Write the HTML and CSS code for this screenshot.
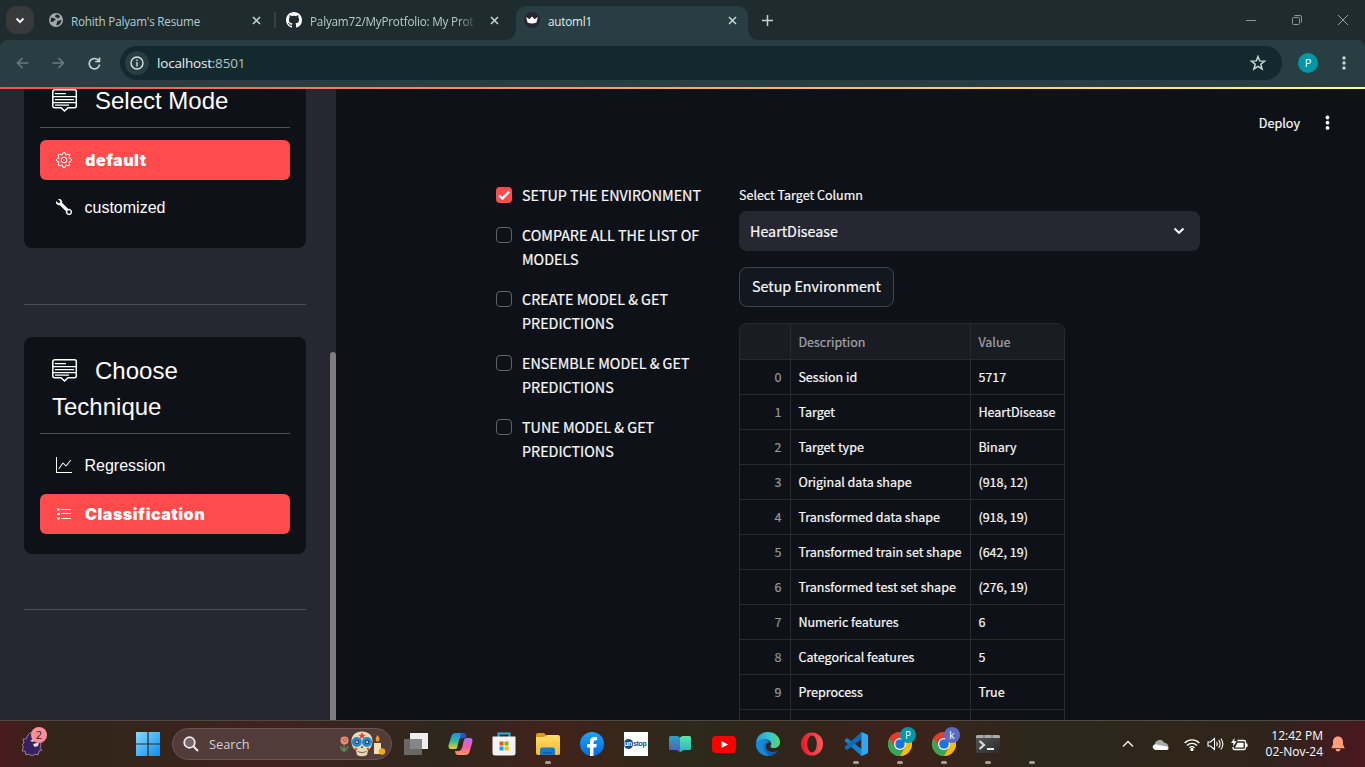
FILE: index.html
```html
<!DOCTYPE html>
<html lang="en">
<head>
<meta charset="utf-8">
<title>automl1</title>
<link rel="stylesheet" href="styles.css">
</head>
<body>
<svg width="0" height="0" class="defs">
  <defs>
    <linearGradient id="win" x1="0" y1="0" x2="1" y2="1"><stop offset="0" stop-color="#83dcff"/><stop offset="1" stop-color="#0b8df2"/></linearGradient>
    <linearGradient id="fold" x1="0" y1="0" x2="0" y2="1"><stop offset="0" stop-color="#ffdc6b"/><stop offset="1" stop-color="#f5b92a"/></linearGradient>
    <linearGradient id="fb" x1="0" y1="0" x2="0" y2="1"><stop offset="0" stop-color="#1aa6fb"/><stop offset="1" stop-color="#0668e1"/></linearGradient>
    <linearGradient id="cpa" x1="0" y1="0" x2="0" y2="1"><stop offset="0" stop-color="#1b8ff0"/><stop offset=".5" stop-color="#2fb89a"/><stop offset="1" stop-color="#f2d01e"/></linearGradient>
    <linearGradient id="cpb" x1="0" y1="0" x2="0" y2="1"><stop offset="0" stop-color="#b56cf5"/><stop offset=".55" stop-color="#f0609c"/><stop offset="1" stop-color="#ff9a62"/></linearGradient>
    <linearGradient id="bkl" x1="0" y1="0" x2="0" y2="1"><stop offset="0" stop-color="#29a4bf"/><stop offset="1" stop-color="#5b55bf"/></linearGradient>
    <linearGradient id="bkr" x1="0" y1="0" x2="0" y2="1"><stop offset="0" stop-color="#5ee6a6"/><stop offset="1" stop-color="#22b3c4"/></linearGradient>
    <linearGradient id="edt" x1="0" y1="0" x2="1" y2="0"><stop offset="0" stop-color="#1f9de0"/><stop offset=".6" stop-color="#36c7cf"/><stop offset="1" stop-color="#63d957"/></linearGradient>
    <linearGradient id="edb" x1="0" y1="0" x2="1" y2="1"><stop offset="0" stop-color="#1b8fe0"/><stop offset="1" stop-color="#0b4ea5"/></linearGradient>
    <linearGradient id="opr" x1="0" y1="0" x2="1" y2="0"><stop offset="0" stop-color="#f0142d"/><stop offset="1" stop-color="#ff5a5a"/></linearGradient>
    <linearGradient id="trm" x1="0" y1="0" x2="1" y2="1"><stop offset="0" stop-color="#575757"/><stop offset="1" stop-color="#2a2a2a"/></linearGradient>
    <g id="chrome">
      <circle cx="12" cy="12" r="12" fill="#ea4335"/>
      <path d="M1.6 6A12 12 0 0 0 12 24L17.2 15 12 12 6.8 15Z" fill="#34a853"/>
      <path d="M22.4 6A12 12 0 0 1 12 24L17.2 15 12 6Z" fill="#fbbc04"/>
      <path d="M12 6H22.4A12 12 0 0 0 1.6 6L6.8 15Z" fill="#e33b2e"/>
      <circle cx="12" cy="12" r="6" fill="#fff"/><circle cx="12" cy="12" r="4.8" fill="#1a73e8"/>
    </g>
    <g id="note" fill="none" stroke="#fff" stroke-width="1.5">
      <path d="M3 .8H22.500Q24.300 .8 24.300 2.500V17Q24.300 18.700 22.500 18.700H16L12.500 22 9 18.700H2.500Q.8 18.700 .8 17V2.500Q.8 .8 3 .8Z"/>
      <path d="M3 4.500H14M1 7.500H24M3 10.500H22M1 13.500H24M3 16H17" stroke-width="1.250"/>
    </g>
    <path id="x" d="M1 1L8 8M8 1L1 8" fill="none" stroke="currentColor" stroke-width="1.5"/>
  </defs>
</svg>

<header class="tabs">
  <div class="tab-menu"><svg width="10" height="7" viewBox="0 0 10 7"><path d="M1.5 1.5L5 5 8.5 1.5" fill="none" stroke="#e8eeee" stroke-width="2"/></svg></div>
  <div class="tab first">
    <svg class="fav" width="14" height="14" viewBox="0 0 14 14"><circle cx="7" cy="7" r="7" fill="#a3a9b0"/><path d="M2.2 4.5L5.5 5.2 7 7.3H5.5L4 9 1.4 8.5ZM7 1.4L10 2 11 4 9 5.4 7.5 4.6 5.8 3.6ZM8.5 8L11.8 7 12.5 8 10.5 11.5 7.2 12.4 7.6 10.4Z" fill="#1e2c2f"/></svg>
    <span class="tab-title">Rohith Palyam's Resume</span>
    <svg class="close" width="9" height="9"><use href="#x"/></svg>
  </div>
  <div class="tab second">
    <svg class="fav" width="16" height="16" viewBox="0 0 16 16"><path fill="#fff" d="M8 0C3.58 0 0 3.58 0 8c0 3.54 2.29 6.53 5.47 7.59.4.07.55-.17.55-.38 0-.19-.01-.82-.01-1.49-2.01.37-2.53-.49-2.69-.94-.09-.23-.48-.94-.82-1.13-.28-.15-.68-.52-.01-.53.63-.01 1.08.58 1.23.82.72 1.21 1.87.87 2.33.66.07-.52.28-.87.51-1.07-1.78-.2-3.64-.89-3.64-3.95 0-.87.31-1.59.82-2.15-.08-.2-.36-1.02.08-2.12 0 0 .67-.21 2.2.82.64-.18 1.32-.27 2-.27.68 0 1.36.09 2 .27 1.53-1.04 2.2-.82 2.2-.82.44 1.1.16 1.92.08 2.12.51.56.82 1.27.82 2.15 0 3.07-1.87 3.75-3.65 3.95.29.25.54.73.54 1.48 0 1.07-.01 1.93-.01 2.2 0 .21.15.46.55.38A8.012 8.012 0 0 0 16 8c0-4.42-3.58-8-8-8z"/></svg>
    <span class="tab-title fade">Palyam72/MyProtfolio: My Prot</span>
    <svg class="close" width="9" height="9"><use href="#x"/></svg>
  </div>
  <div class="tab active">
    <svg class="fav" width="16" height="16" viewBox="0 0 16 16"><circle cx="8" cy="8" r="8" fill="#262730"/><path d="M2 5L5.4 7.2 8 4.6 10.6 7.2 14 5 12.3 10.8Q8 12 3.7 10.8Z" fill="#fff"/></svg>
    <span class="tab-title">automl1</span>
    <svg class="close" width="9" height="9"><use href="#x"/></svg>
  </div>
  <svg class="plus" width="11" height="11"><path d="M5.5 0V11M0 5.5H11" stroke="#c5d2d4" stroke-width="1.5"/></svg>
  <div class="win">
    <svg width="10" height="10"><path d="M0 5.5H10" stroke="#8d9798"/></svg>
    <svg width="10" height="10" fill="none" stroke="#8d9798"><rect x=".5" y="2.5" width="7" height="7" rx="1"/><path d="M2.5 .5H8Q9.500 .5 9.500 2V7.500"/></svg>
    <svg width="10" height="10"><path d="M0 0L10 10M10 0L0 10" stroke="#98a1a2"/></svg>
  </div>
</header>

<div class="toolbar">
  <div class="nav">
    <svg width="13" height="12" class="dim"><path d="M12.500 6H1.500M6.500 1L1.500 6 6.500 11"/></svg>
    <svg width="13" height="12" class="dim"><path d="M.5 6H11.500M6.500 1L11.500 6 6.500 11"/></svg>
    <svg width="13" height="13" class="lit"><path d="M10.800 3.800A5.200 5.200 0 1 0 11.600 7.500M11.500 .5V4.500H7.200"/></svg>
  </div>
  <div class="omni">
    <span class="info"><svg width="14" height="14" fill="none" stroke="#d8e2e3" stroke-width="1.400"><circle cx="7" cy="7" r="6"/><path d="M7 6V10.500M7 3.500V5"/></svg></span>
    <span class="url">localhost<span class="port">:8501</span></span>
    <svg class="star" width="16" height="16" viewBox="0 0 16 16"><path d="M8 1.500L9.700 5.900 14.600 6.200 10.800 9.200 12.100 14 8 11.300 3.900 14 5.200 9.200 1.400 6.200 6.300 5.900Z" fill="none" stroke="#c9d6d8" stroke-width="1.500"/></svg>
  </div>
  <span class="avatar">P</span>
  <svg class="dots" width="4" height="16" fill="#c9d6d8"><circle cx="2" cy="3" r="1.700"/><circle cx="2" cy="8" r="1.700"/><circle cx="2" cy="13" r="1.700"/></svg>
</div>
<div class="rainbow"></div>

<div class="app">
  <aside class="sidebar">
    <section class="card mode">
      <h2><svg width="26" height="24"><use href="#note"/></svg>Select Mode</h2>
      <hr>
      <div class="item on"><svg width="16" height="16" viewBox="0 0 16 16" fill="#fff"><path d="M8 4.754a3.246 3.246 0 1 0 0 6.492 3.246 3.246 0 0 0 0-6.492zM5.754 8a2.246 2.246 0 1 1 4.492 0 2.246 2.246 0 0 1-4.492 0z"/><path d="M9.796 1.343c-.527-1.79-3.065-1.79-3.592 0l-.094.319a.873.873 0 0 1-1.255.52l-.292-.16c-1.64-.892-3.433.902-2.54 2.541l.159.292a.873.873 0 0 1-.52 1.255l-.319.094c-1.79.527-1.79 3.065 0 3.592l.319.094a.873.873 0 0 1 .52 1.255l-.16.292c-.892 1.64.901 3.434 2.541 2.54l.292-.159a.873.873 0 0 1 1.255.52l.094.319c.527 1.79 3.065 1.79 3.592 0l.094-.319a.873.873 0 0 1 1.255-.52l.292.16c1.64.893 3.434-.902 2.54-2.541l-.159-.292a.873.873 0 0 1 .52-1.255l.319-.094c1.79-.527 1.79-3.065 0-3.592l-.319-.094a.873.873 0 0 1-.52-1.255l.16-.292c.893-1.64-.902-3.433-2.541-2.54l-.292.159a.873.873 0 0 1-1.255-.52l-.094-.319zm-2.633.283c.246-.835 1.428-.835 1.674 0l.094.319a1.873 1.873 0 0 0 2.693 1.115l.291-.16c.764-.415 1.6.42 1.184 1.185l-.159.292a1.873 1.873 0 0 0 1.116 2.692l.318.094c.835.246.835 1.428 0 1.674l-.319.094a1.873 1.873 0 0 0-1.115 2.693l.16.291c.415.764-.42 1.6-1.185 1.184l-.291-.159a1.873 1.873 0 0 0-2.693 1.116l-.094.318c-.246.835-1.428.835-1.674 0l-.094-.319a1.873 1.873 0 0 0-2.692-1.115l-.292.16c-.764.415-1.6-.42-1.184-1.185l.159-.291A1.873 1.873 0 0 0 1.945 8.93l-.319-.094c-.835-.246-.835-1.428 0-1.674l.319-.094A1.873 1.873 0 0 0 3.06 4.377l-.16-.292c-.415-.764.42-1.6 1.185-1.184l.292.159a1.873 1.873 0 0 0 2.692-1.115l.094-.319z"/></svg><span>default</span></div>
      <div class="item"><svg width="16" height="16" viewBox="0 0 16 16" fill="#fff" stroke="#fff" stroke-width=".4"><path d="M.102 2.223A3.004 3.004 0 0 0 3.78 5.897l6.341 6.252A3.003 3.003 0 0 0 13 16a3 3 0 1 0-.851-5.878L5.897 3.781A3.004 3.004 0 0 0 2.223.1l2.141 2.142L4 4l-1.757.364L.102 2.223zm13.37 9.019.528.026.287.445.445.287.026.529L15 13l-.242.471-.026.529-.445.287-.287.445-.529.026L13 15l-.471-.242-.529-.026-.287-.445-.445-.287-.026-.529L11 13l.242-.471.026-.529.445-.287.287-.445.529-.026L13 11l.471.242z"/></svg><span>customized</span></div>
    </section>
    <hr class="rule">
    <section class="card technique">
      <h2><svg width="26" height="24"><use href="#note"/></svg>Choose Technique</h2>
      <hr>
      <div class="item"><svg width="16" height="16" viewBox="0 0 16 16" fill="#fff"><path d="M0 0h1v15h15v1H0V0Zm14.817 3.113a.5.5 0 0 1 .07.704l-4.500 5.500a.5.5 0 0 1-.74.037L7.060 6.767l-3.656 5.027a.5.5 0 0 1-.808-.588l4-5.500a.5.5 0 0 1 .758-.06l2.609 2.610 4.150-5.073a.5.5 0 0 1 .704-.07Z"/></svg><span>Regression</span></div>
      <div class="item on"><svg width="16" height="16" viewBox="0 0 16 16"><path d="M5 3.500H15M5 7.500H15M5 12.500H15" stroke="#fff"/><path d="M1 3.500H3.600M1 8H3.600M1 12.500H3.600" stroke="#fff" stroke-width="2.200"/></svg><span>Classification</span></div>
    </section>
    <hr class="rule low">
    <div class="scroll"></div>
  </aside>

  <main class="main">
    <div class="app-bar"><span>Deploy</span><svg width="5" height="16" fill="#fafafa"><circle cx="2.500" cy="2.500" r="1.900"/><circle cx="2.500" cy="7.700" r="1.900"/><circle cx="2.500" cy="12.900" r="1.900"/></svg></div>
    <div class="columns">
      <div class="steps">
        <label class="step"><span class="box checked"><svg width="16" height="16"><path d="M3 8.300L6.500 11.600 13 4.600" fill="none" stroke="#fff" stroke-width="2.400"/></svg></span><span>SETUP THE ENVIRONMENT</span></label>
        <label class="step"><span class="box"></span><span>COMPARE ALL THE LIST OF MODELS</span></label>
        <label class="step"><span class="box"></span><span>CREATE MODEL &amp; GET PREDICTIONS</span></label>
        <label class="step"><span class="box"></span><span>ENSEMBLE MODEL &amp; GET PREDICTIONS</span></label>
        <label class="step"><span class="box"></span><span>TUNE MODEL &amp; GET PREDICTIONS</span></label>
      </div>
      <div class="panel">
        <div class="label">Select Target Column</div>
        <div class="select"><span>HeartDisease</span><svg width="12" height="8"><path d="M1.500 1.500L6 5.800 10.500 1.500" fill="none" stroke="#fafafa" stroke-width="2"/></svg></div>
        <div class="button">Setup Environment</div>
        <div class="grid">
          <div class="row head"><span></span><span>Description</span><span>Value</span></div>
          <div class="row"><span>0</span><span>Session id</span><span>5717</span></div>
          <div class="row"><span>1</span><span>Target</span><span>HeartDisease</span></div>
          <div class="row"><span>2</span><span>Target type</span><span>Binary</span></div>
          <div class="row"><span>3</span><span>Original data shape</span><span>(918, 12)</span></div>
          <div class="row"><span>4</span><span>Transformed data shape</span><span>(918, 19)</span></div>
          <div class="row"><span>5</span><span>Transformed train set shape</span><span>(642, 19)</span></div>
          <div class="row"><span>6</span><span>Transformed test set shape</span><span>(276, 19)</span></div>
          <div class="row"><span>7</span><span>Numeric features</span><span>6</span></div>
          <div class="row"><span>8</span><span>Categorical features</span><span>5</span></div>
          <div class="row"><span>9</span><span>Preprocess</span><span>True</span></div>
          <div class="row"><span></span><span></span><span></span></div>
        </div>
      </div>
    </div>
  </main>
</div>

<footer class="taskbar">
  <div class="widget"><svg width="22" height="26" viewBox="0 0 22 26"><path d="M7 4L10 1 12 4 17 5 18 9 20 13 19 17 21 19 18 20 17 24 14 23 11 25 8 23 5 24 4 20 1 20 2.500 16 1 14 3 12 2 8 5 8Z" fill="#37205f" stroke="#b9aab9" stroke-width=".7"/><path d="M12 13L18 11.500 17 15 13.500 16ZM9 10L12 8 13 11Z" fill="#e8e0ec"/></svg><span class="count">2</span></div>
  <svg class="start" width="24" height="24"><path d="M0 0H11.400V11.400H0ZM12.600 0H24V11.400H12.600ZM0 12.600H11.400V24H0ZM12.600 12.600H24V24H12.600Z" fill="url(#win)"/></svg>
  <div class="search">
    <svg width="16" height="16"><circle cx="6.500" cy="6.500" r="5.300" fill="#75656a" stroke="#eee" stroke-width="1.700"/><path d="M10.400 10.400L15 15" stroke="#eee" stroke-width="2"/></svg>
    <span>Search</span>
    <svg class="art" width="46" height="26" viewBox="0 0 46 26">
      <path d="M4 12V21M4 18Q0 18 1 15M4 18Q8 18 8 15M4 20L1 19M4 20L7 19" stroke="#5f8a58" fill="none" stroke-width="1.300"/><circle cx="4.500" cy="9.500" r="4" fill="#ef8c76"/><path d="M2 9Q4.500 6 7 9Q5 12 3 10" fill="none" stroke="#bd5750"/>
      <path d="M22 .5C15 .5 11 5 11.500 11C11.700 15 13.500 18 16 19.500L17 24Q22 26.500 27 24L28 19.500C31 17 32.500 14 32.500 10C32.500 4 28 .5 22 .5Z" fill="#ead9b4"/>
      <circle cx="16.800" cy="11" r="5" fill="#218bd6"/><circle cx="27" cy="11" r="5" fill="#218bd6"/><circle cx="16.800" cy="11" r="2.300" fill="#183e84"/><circle cx="27" cy="11" r="2.300" fill="#183e84"/><circle cx="16.800" cy="11" r="1.200" fill="#f0c438"/><circle cx="27" cy="11" r="1.200" fill="#f0c438"/>
      <path d="M22 1L23 3.500 25.500 4 23.700 5.600 24.200 8 22 6.700 19.800 8 20.300 5.600 18.500 4 21 3.500Z" fill="#e0483d"/><path d="M21 17L22 14.500 23 17Z" fill="#38353a"/><circle cx="16" cy="18" r="1.300" fill="#dc5144"/><circle cx="28" cy="18" r="1.300" fill="#dc5144"/><path d="M17.500 20.500Q22 23 26.500 20.500" stroke="#554e43" fill="none" stroke-width=".8"/>
      <path d="M34 12H41V23H34Z" fill="#f4dfb5"/><path d="M37.500 4Q41 8 38.500 10.500H36.500Q34.500 8 37.500 4Z" fill="#f89a24"/><circle cx="42" cy="20.500" r="3.300" fill="#f2a71b"/>
    </svg>
  </div>
  <nav class="pins">
    <div class="pin"><svg width="24" height="22"><rect x="6" y="0" width="18" height="16" fill="#eee"/><rect x="0" y="6" width="18" height="16" fill="#737373" opacity=".85"/></svg></div>
    <div class="pin"><svg width="25" height="22" viewBox="0 0 25 22"><path d="M7.500 0H15Q17 0 17.600 2L18 4H14Q12 4 11 7L9 15Q8.500 16 6.500 16H3Q0 16 .6 12L3.500 3Q4.500 0 7.500 0Z" fill="url(#cpa)"/><path d="M17.500 22H10Q8 22 7.400 20L7 18H11Q13 18 14 15L16 7Q16.500 5 18.500 5H22Q25 5 24.400 9L21.500 19Q20.500 22 17.500 22Z" fill="url(#cpb)"/><path d="M14 0Q17 0 18 4L17 5Q14 5 12 6L12.500 2Q13 0 14 0Z" fill="#2456c8"/></svg></div>
    <div class="pin"><svg width="24" height="24"><path d="M6.500 5V1.500H17.500V5" fill="none" stroke="#2bb0e8" stroke-width="2"/><path d="M.5 4.500H23.500V21Q23.500 23.500 21 23.500H3Q.5 23.500 .5 21Z" fill="#f3f3f3"/><path d="M7.500 9.500H11.500V13.500H7.500Z" fill="#f25022"/><path d="M12.500 9.500H16.500V13.500H12.500Z" fill="#7fba00"/><path d="M7.500 14.500H11.500V18.500H7.500Z" fill="#00a4ef"/><path d="M12.500 14.500H16.500V18.500H12.500Z" fill="#ffb900"/></svg></div>
    <div class="pin run"><svg width="24" height="22"><path d="M0 2Q0 0 2 0H8L11 3V7H0Z" fill="#d99a14"/><path d="M0 4H8L11 2H22Q24 2 24 4V21Q24 22 22 22H2Q0 22 0 20Z" fill="url(#fold)"/><path d="M4 22V17Q4 14.500 6.500 14.500H17Q19 14.500 19 17V22Z" fill="#1479ca"/><path d="M7 19H16V20.500H7Z" fill="#0d5da8"/></svg></div>
    <div class="pin"><svg width="24" height="24"><circle cx="12" cy="12" r="12" fill="url(#fb)"/><path d="M10 24V15.500H7V12H10V9.500Q10 5 14.500 5Q16 5 17 5.300V8.300H15.300Q13.500 8.300 13.500 10V12H16.800L16.200 15.500H13.500V24Z" fill="#fff"/></svg></div>
    <div class="pin"><div class="unstop"><i>un</i>stop</div></div>
    <div class="pin"><svg width="22" height="18"><path d="M11 2.500Q10 1 8 1H1.500Q0 1 0 2.500V13.500Q0 15 1.500 15H7Q9 15 11 17.500Z" fill="url(#bkl)"/><path d="M11 2.500Q12 1 14 1H20.500Q22 1 22 2.500V13.500Q22 15 20.500 15H15Q13 15 11 17.500Z" fill="url(#bkr)"/></svg></div>
    <div class="pin"><svg width="24" height="17"><rect width="24" height="17" rx="4" fill="#f00"/><path d="M9.500 5L16 8.500 9.500 12Z" fill="#fff"/></svg></div>
    <div class="pin"><svg width="24" height="24"><path d="M0 12C0 5 5 0 12 0C19 0 24 5 24 10C24 14 21 16 18 16C15.500 16 14 15 14.500 14C16.500 11 14 7.500 9.500 7.500C5 7.500 1 10 0 12Z" fill="url(#edt)"/><path d="M0 12C1 9 5 7 9 7.500C12 8 14 9.500 14 10.500C11 10 9 13 10 16C11.500 20 17 21.500 22 18.500C20 22 16 24 12 24C5 24 0 19 0 12Z" fill="url(#edb)"/><path d="M9 8C6 11 6 19 13 24C6 24 0 19 0 12C1 9 5 7 9 8Z" fill="#1789d8"/></svg></div>
    <div class="pin"><svg width="24" height="24"><ellipse cx="12" cy="12" rx="11" ry="11.500" fill="url(#opr)"/><ellipse cx="12" cy="12" rx="4.800" ry="8.500" fill="#30251b"/></svg></div>
    <div class="pin run"><svg width="24" height="24"><path d="M17.500 0L24 3V21L17.500 24L1.200 9.400Q0 8.500 1 7.600L2.300 6.500Q3 6 3.800 6.500L17.500 17Z" fill="#1481ce"/><path d="M17.500 0V7L3.800 17.500Q3 18 2.300 17.500L1 16.400Q0 15.500 1.200 14.600Z" fill="#0e6cb4"/><path d="M17.500 0L24 3V21L17.500 24Z" fill="#31a8f3"/></svg></div>
    <div class="pin run"><svg width="24" height="24"><use href="#chrome"/></svg><span class="who teal">P</span></div>
    <div class="pin run"><svg width="24" height="24"><use href="#chrome"/></svg><span class="who indigo">k</span></div>
    <div class="pin run"><svg width="24" height="18"><rect width="24" height="18" rx="1.500" fill="url(#trm)"/><path d="M0 1.500Q0 0 1.500 0H22.500Q24 0 24 1.500V3H0Z" fill="#aaa"/><path d="M8 0V3M16 0V3" stroke="#666"/><path d="M3.500 6L8 10 3.500 14" fill="none" stroke="#ddd" stroke-width="2.200"/><path d="M11 14H18" stroke="#fff" stroke-width="1.800"/></svg></div>
    <div class="pin run"></div>
  </nav>
  <div class="tray">
    <svg width="12" height="8"><path d="M1 6.500L6 1.500 11 6.500" fill="none" stroke="#eee" stroke-width="1.500"/></svg>
    <svg width="17" height="11"><path d="M3 6.500A4.800 4.800 0 0 1 12 3.500Q16 4 16.500 8L6 10Z" fill="#aaa"/><path d="M3.500 11A3 3 0 0 1 1.500 6Q4 4.500 6.500 6L14.500 7.500Q17 8 16.500 10L15 11Z" fill="#fff"/></svg>
    <svg width="16" height="13" fill="none" stroke="#fff" stroke-width="1.300"><path d="M.7 5A10.300 10.300 0 0 1 15.300 5M3 7.500A7 7 0 0 1 13 7.500M5.400 9.700A4 4 0 0 1 10.600 9.700"/><circle cx="8" cy="11.500" r="1" fill="#fff"/></svg>
    <svg width="17" height="14" fill="none" stroke="#fff" stroke-width="1.100"><path d="M1 5H3.500L7.500 1.500V12.500L3.500 9H1ZM9.500 5Q11 7 9.500 9M11.700 3.200Q14.500 7 11.700 10.800M13.800 1.500Q18 7 13.800 12.500"/></svg>
    <svg width="17" height="13"><path d="M6.500 2.500H13Q14.500 2.500 14.500 4V10Q14.500 11.500 13 11.500H3.500Q2 11.500 2 10V9" fill="none" stroke="#fff" stroke-width="1.300"/><path d="M6.500 4.800H12.500V9.500H4ZM15 5.500H16.500V9H15ZM3.500 0L0 5H2.500L2 8.500 5.700 3.300H3.300Z" fill="#fff"/></svg>
  </div>
  <div class="clock">12:42 PM<br>02-Nov-24</div>
  <svg class="bell" width="14" height="16"><path d="M7 .5C3.500 .5 2 3 2 6V8.500L.3 12.300H13.700L12 8.500V6C12 3 10.500 .5 7 .5ZM4.500 13H9.500Q9 15.500 7 15.500Q5 15.500 4.500 13Z" fill="#ffa07d"/></svg>
</footer>
</body>
</html>
```
FILE: styles.css
```css
* { box-sizing: border-box; }
body { margin: 0; width: 1365px; height: 767px; overflow: hidden; display: flex; flex-direction: column; background: #0e1117; color: #fafafa; font-family: "Noto Sans CJK JP", sans-serif; }
svg { display: block; flex: none; }
.defs { position: absolute; }

/* Browser window */
.tabs { height: 40px; flex: none; display: flex; align-items: center; background: #1e2c2f; font: 11.700px/16px "Open Sans", sans-serif; color: #b4cccf; }
.tab-menu { width: 28px; height: 28px; margin-left: 6px; border-radius: 10px; background: #37393b; display: grid; place-items: center; }
.tab { display: flex; align-items: center; height: 34px; margin-top: 6px; padding-bottom: 6px; }
.tab.first { width: 241px; padding-left: 15px; padding-right: 14px; }
.tab.second { width: 241px; padding-left: 11px; padding-right: 17px; position: relative; }
.tab.second::before { content: ""; position: absolute; left: -1px; top: 6px; width: 2px; height: 16px; background: #354143; }
.tab.active { width: 232px; padding-left: 8px; padding-right: 11px; background: #283e42; border-radius: 10px 10px 0 0; color: #e0eced; position: relative; }
.tab.active::before, .tab.active::after { content: ""; position: absolute; bottom: 0; width: 10px; height: 10px; }
.tab.active::before { left: -10px; background: radial-gradient(circle at 0 0, transparent 9.500px, #283e42 10px); }
.tab.active::after { right: -10px; background: radial-gradient(circle at 100% 0, transparent 9.500px, #283e42 10px); }
.tab-title { flex: 1; margin-left: 8px; padding-top: 1px; white-space: nowrap; letter-spacing: -.2px; }
.fade { width: 168px; flex: none; margin-right: 10px; -webkit-mask-image: linear-gradient(90deg, #000 88%, transparent); mask-image: linear-gradient(90deg, #000 88%, transparent); }
.second .close { margin-left: auto; }
.close { color: #c5d8da; }
.plus { margin-left: 14px; }
.win { margin-left: auto; margin-right: 17px; display: flex; gap: 36px; }
.toolbar { height: 47px; flex: none; display: flex; align-items: center; background: #283e42; border-radius: 8px 8px 0 0; box-shadow: 0 -8px 0 0 #1e2c2f; padding-bottom: 1px; position: relative; z-index: -1; }
.nav { display: flex; align-items: center; width: 120px; padding-left: 16px; gap: 23px; }
.nav svg { fill: none; stroke-width: 1.600; }
.dim { stroke: #687a7d; }
.lit { stroke: #c5d6d8; }
.omni { width: 1162px; height: 34px; border-radius: 17px; background: #12292d; display: flex; align-items: center; padding: 0 16px 0 5px; }
.info { width: 24px; height: 24px; border-radius: 12px; background: #283e42; display: grid; place-items: center; }
.url { margin-left: 8px; flex: 1; font: 13.500px/20px "Open Sans", sans-serif; letter-spacing: -.2px; color: #e9f0f0; }
.port { color: #b2c3c5; }
.avatar { width: 20px; height: 20px; margin-left: 16px; border-radius: 10px; background: #0097a7; color: #fff; font: 11px/20px "Open Sans", sans-serif; text-align: center; }
.dots { margin-left: 24px; }
.rainbow { height: 2px; flex: none; background: linear-gradient(90deg, #ff4b4b, #fffd80); }

/* Sidebar */
.app { height: 631px; flex: none; display: flex; overflow: hidden; }
.sidebar { width: 336px; flex: none; position: relative; background: #262730; padding: 0 30px 0 24px; font-family: "Liberation Sans", sans-serif; overflow: hidden; }
.card { background: #0e1117; border-radius: 8px; padding: 16px 16px 0; }
.card.mode { height: 181px; margin-top: -22px; }
.card.technique { height: 217px; margin-top: 32px; }
.card h2 { margin: 0; padding: 0 12px; font-size: 24px; line-height: 36px; font-weight: 400; color: #fff; }
.card h2 svg { display: inline-block; vertical-align: -4px; margin: 0 17px 0 0; }
.card hr { margin: 8px 0 0; border: 0; height: 1px; background: #4d5154; }
.item { height: 40px; display: flex; align-items: center; gap: 12.500px; padding-left: 16px; border-radius: 6px; font-size: 16px; color: #fff; }
.item span { padding-top: 2px; }
.item.on { background: #ff4b4b; font-family: Inter, sans-serif; font-weight: 900; letter-spacing: .55px; gap: 13px; }
.item.on span { padding-top: 0; }
.mode .on { margin-top: 12px; }
.mode .item + .item { margin-top: 7px; }
.technique hr + .item { margin-top: 11px; }
.technique .item + .item { margin-top: 9px; }
.rule { margin: 56px 0 0; border: 0; height: 1px; background: #4c4d55; }
.low { margin-top: 55px; }
.scroll { position: absolute; right: 0; top: 263px; width: 6px; height: 400px; border-radius: 3px; background: #7d7d82; }

/* Page */
.main { flex: 1; overflow: hidden; -webkit-text-stroke: .2px currentColor; }
.app-bar { height: 69px; display: flex; align-items: center; justify-content: flex-end; gap: 25px; padding: 0 35px 1px 0; font-size: 12.600px; line-height: 20px; }
.columns { display: flex; padding: 26px 0 0 160px; }
.steps { width: 243px; padding-right: 34px; margin-top: -1px; display: flex; flex-direction: column; gap: 16px; font-size: 14.320px; line-height: 24px; }
.step { display: flex; gap: 10px; }
.box { width: 16px; height: 16px; flex: none; margin-top: 4px; border: 1px solid #62646b; border-radius: 4px; }
.box.checked { border: 0; background: #ff4b4b; }
.panel { width: 461px; }
.label { height: 27px; font-size: 12.500px; line-height: 22px; }
.select { height: 40px; border-radius: 8px; background: #262730; display: flex; align-items: center; justify-content: space-between; padding: 0 15px 0 11px; font-size: 14.300px; line-height: 24px; }
.button { width: 155px; height: 40px; margin: 16px 0; border: 1px solid #42444b; border-radius: 8px; background: #131720; text-align: center; font-size: 14.300px; line-height: 36px; }
.grid { width: 326px; border: 1px solid #282a30; border-bottom: 0; border-radius: 8px 8px 0 0; overflow: hidden; font-size: 12.540px; }
.row { height: 35px; display: grid; grid-template-columns: 51px 180px 93px; border-bottom: 1px solid #282a30; line-height: 34px; }
.row.head { height: 36px; line-height: 36px; background: #1a1c24; }
.row.head span { color: #a3a4a8; }
.row span { padding-left: 7.400px; border-right: 1px solid #282a30; white-space: nowrap; }
.row span:first-child { padding: 0 8.500px 0 0; text-align: right; color: #96989c; }
.row span:last-child { border-right: 0; }

/* Taskbar */
.taskbar { height: 47px; flex: none; display: flex; align-items: center; border-top: 1px solid #504a43; font-family: "Open Sans", sans-serif; background: linear-gradient(90deg, #481b1d 0, #33251a 55px, #35251a 150px, #42211f 260px, #2e271c 440px, #42221b 550px, #2d291a 680px, #30251a 800px, #3d221a 900px, #2b281b 1050px, #302519 1190px, #2f241d 1270px, #4a171e 1365px); }
.widget { width: 28px; margin-left: 21px; position: relative; }
.count { position: absolute; left: 10px; top: -4px; width: 16px; height: 16px; border-radius: 8px; background: #ff8f98; color: #222; font-size: 11px; line-height: 16px; text-align: center; }
.start { margin-left: 86.500px; }
.search { width: 220px; height: 32px; margin-left: 12.500px; padding: 0 5px 0 10px; border: 1px solid #6a5550; border-radius: 16px; background: #513c3a; display: flex; align-items: center; font-size: 12.800px; color: #d8cfcf; }
.search span { margin-left: 10px; }
.art { margin-left: auto; }
.pins { display: flex; margin-left: 2px; }
.pin { width: 44px; height: 46px; display: grid; place-items: center; position: relative; }
.pin.run::after { content: ""; position: absolute; bottom: 3px; left: 19px; width: 6px; height: 3px; border-radius: 2px; background: #a49d99; }
.unstop { width: 24px; height: 24px; display: flex; align-items: center; background: #fff; color: #1c4980; font: 700 7px/10px "Liberation Sans", sans-serif; letter-spacing: -.3px; }
.unstop i { width: 9px; height: 10px; line-height: 10px; border-radius: 5px; background: #1c4980; color: #fff; font-style: normal; flex: none; }
.who { position: absolute; left: 22px; top: 6px; width: 16px; height: 16px; border-radius: 8px; color: #fff; font-size: 10px; line-height: 16px; text-align: center; }
.teal { background: #0097a7; }
.indigo { background: #5c6bc0; }
.tray { display: flex; align-items: center; margin-left: 68px; }
.tray svg + svg { margin-left: 18px; }
.tray svg:nth-child(3) { margin-left: 15px; }
.tray svg:nth-child(4), .tray svg:nth-child(5) { margin-left: 7px; }
.clock { margin-left: auto; font-size: 12px; line-height: 16px; color: #fff; text-align: right; }
.bell { margin: 0 20px 0 8px; }
```
